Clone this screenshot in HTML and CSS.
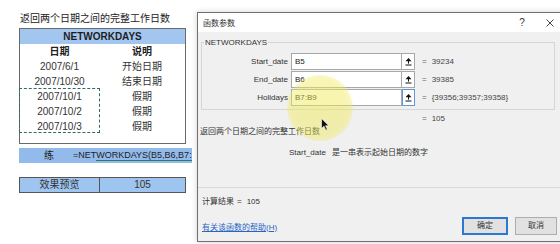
FILE: index.html
```html
<!DOCTYPE html>
<html lang="zh-CN">
<head>
<meta charset="utf-8">
<title>NETWORKDAYS</title>
<link rel="stylesheet" href="styles.css">
</head>
<body>
<div class="screen">
  <section class="sheet">
    <div class="sheet-title">返回两个日期之间的完整工作日数</div>
    <div class="table">
      <div class="thead">NETWORKDAYS</div>
      <div class="trow bold"><span>日期</span><span>说明</span></div>
      <div class="trow"><span>2007/6/1</span><span>开始日期</span></div>
      <div class="trow"><span>2007/10/30</span><span>结束日期</span></div>
      <div class="trow"><span>2007/10/1</span><span>假期</span></div>
      <div class="trow"><span>2007/10/2</span><span>假期</span></div>
      <div class="trow"><span>2007/10/3</span><span>假期</span></div>
      <div class="tfill"></div>
      <div class="marquee"></div>
    </div>
    <div class="formula"><span class="f-label">练</span><span class="f-text">=NET<span class="f-edit">WORKDAYS(B5,B6,B7:</span></span></div>
    <div class="result"><span class="r-cell">效果预览</span><span>105</span></div>
  </section>

  <section class="dialog">
    <div class="titlebar">
      <span class="title">函数参数</span>
      <span class="tb-btn">?</span>
      <span class="tb-btn"><svg width="8" height="8" viewBox="0 0 8 8"><path d="M0.5 0.5 L7.5 7.5 M7.5 0.5 L0.5 7.5" stroke="#333" stroke-width="0.9" fill="none"/></svg></span>
    </div>
    <div class="group">
      <div class="group-title">NETWORKDAYS</div>
      <div class="args">
        <div class="arg">
          <span class="arg-label">Start_date</span>
          <span class="arg-input">B5</span>
          <span class="arg-ref"><svg width="7" height="8" viewBox="0 0 7 8"><path d="M3.5 0 L6.5 3.2 H0.5 Z" fill="#111"/><rect x="3" y="3" width="1" height="2.6" fill="#111"/><rect x="0.5" y="6.5" width="6" height="1" fill="#111"/></svg></span>
          <span class="arg-val"><span class="eq">=</span>39234</span>
        </div>
        <div class="arg">
          <span class="arg-label">End_date</span>
          <span class="arg-input">B6</span>
          <span class="arg-ref"><svg width="7" height="8" viewBox="0 0 7 8"><path d="M3.5 0 L6.5 3.2 H0.5 Z" fill="#111"/><rect x="3" y="3" width="1" height="2.6" fill="#111"/><rect x="0.5" y="6.5" width="6" height="1" fill="#111"/></svg></span>
          <span class="arg-val"><span class="eq">=</span>39385</span>
        </div>
        <div class="arg">
          <span class="arg-label">Holidays</span>
          <span class="arg-input">B7:B9</span>
          <span class="arg-ref active"><svg width="7" height="8" viewBox="0 0 7 8"><path d="M3.5 0 L6.5 3.2 H0.5 Z" fill="#111"/><rect x="3" y="3" width="1" height="2.6" fill="#111"/><rect x="0.5" y="6.5" width="6" height="1" fill="#111"/></svg></span>
          <span class="arg-val"><span class="eq">=</span>{39356;39357;39358}</span>
        </div>
      </div>
    </div>
    <div class="total-line"><span class="eq">=</span>105</div>
    <div class="desc">返回两个日期之间的完整工作日数</div>
    <div class="arg-desc"><span class="ad-name">Start_date</span><span>是一串表示起始日期的数字</span></div>
    <div class="sep"></div>
    <div class="calc"><span>计算结果</span><span class="c-eq">=</span><span class="c-val">105</span></div>
    <div class="footer">
      <span class="help">有关该函数的帮助(H)</span>
      <span class="btn primary">确定</span>
      <span class="btn">取消</span>
    </div>
  </section>
</div>
<div class="spot"></div>
<svg class="cursor" width="9" height="13" viewBox="0 0 9 13"><path d="M0.5 0.5 L0.5 10.5 L3 8.2 L4.8 12.2 L6.3 11.5 L4.6 7.7 L7.8 7.7 Z" fill="#111" stroke="#fff" stroke-width="0.6"/></svg>
</body>
</html>
```

FILE: styles.css
```css
* {
  box-sizing: border-box;
  margin: 0;
  padding: 0;
}

body {
  width: 560px;
  height: 244px;
  overflow: hidden;
  position: relative;
  background: #ffffff;
  font-family: "Liberation Sans", "Noto Sans CJK SC", sans-serif;
}

.screen {
  display: flex;
  height: 244px;
}

/* ---------- spreadsheet ---------- */
.sheet {
  width: 197px;
  flex: none;
  overflow: hidden;
  padding: 12px 0 0 19px;
  color: #333;
  font-size: 10px;
}

.sheet-title {
  height: 16px;
  line-height: 14px;
  padding-left: 1px;
  color: #222;
  white-space: nowrap;
}

.table {
  position: relative;
  width: 167px;
  border: 1px solid #6a6a6a;
}

.thead {
  height: 15px;
  line-height: 15px;
  background: #a3c6f0;
  text-align: center;
  font-weight: bold;
  color: #1e1e1e;
}

.trow {
  display: grid;
  grid-template-columns: 79px 86px;
  height: 15px;
  line-height: 15px;
  text-align: center;
}

.trow.bold {
  font-weight: bold;
  color: #222;
}

.tfill {
  height: 9px;
}

.marquee {
  position: absolute;
  left: -1px;
  top: 59px;
  width: 81px;
  height: 45px;
  border: 1px dashed #2f6d63;
}

.formula {
  margin-top: 4px;
  width: 173px;
  height: 15px;
  line-height: 15px;
  background: #92bbec;
  display: flex;
  white-space: nowrap;
  color: #222;
}

.f-label {
  margin-left: 25px;
  width: 10px;
  font-size: 10px;
}

.f-text {
  margin-left: 19px;
  font-size: 9px;
}

.f-edit {
  border-bottom: 1px solid #2f7a6c;
}

.result {
  margin-top: 14px;
  width: 167px;
  height: 16px;
  display: grid;
  grid-template-columns: 80px 1fr;
  border: 1px solid #555;
  background: #9ec4f0;
  line-height: 14px;
  text-align: center;
  color: #333;
}

.r-cell {
  border-right: 1px solid #555;
}

/* ---------- dialog ---------- */
.dialog {
  width: 375px;
  height: 230px;
  flex: none;
  margin-top: 12px;
  border: 1px solid #707070;
  background: #f0f0f0;
  font-size: 8px;
  color: #222;
  display: flex;
  flex-direction: column;
  box-shadow: 0 0 6px rgba(0, 0, 0, 0.18);
}

.titlebar {
  height: 19px;
  flex: none;
  background: #ffffff;
  display: flex;
  align-items: center;
  padding-left: 5px;
  padding-right: 7px;
  color: #333;
}

.title {
  flex: 1;
}

.tb-btn {
  width: 28px;
  display: flex;
  justify-content: center;
  align-items: center;
  font-size: 10px;
  color: #333;
}

.group {
  margin: 10px 16px 0 3px;
  border: 1px solid #d6d6d6;
  padding-bottom: 2px;
}

.group-title {
  width: fit-content;
  margin: -6px 0 0 2px;
  padding: 0 1px;
  background: #f0f0f0;
  line-height: 11px;
  color: #333;
}

.args {
  margin-top: 5px;
}

.arg {
  display: flex;
  align-items: center;
  height: 17px;
  margin-bottom: 1px;
}

.arg-label {
  width: 89px;
  padding-right: 3px;
  text-align: right;
  color: #333;
}

.arg-input {
  width: 111px;
  height: 17px;
  background: #ffffff;
  border: 1px solid #a8a8a8;
  padding-left: 3px;
  line-height: 15px;
  color: #222;
}

.arg-ref {
  width: 13px;
  height: 17px;
  background: #ffffff;
  border: 1px solid #a8a8a8;
  border-left: none;
  display: flex;
  align-items: center;
  justify-content: center;
}

.arg-ref.active {
  border: 1px solid #5a9ad6;
}

.arg-val {
  padding-left: 7px;
  color: #444;
  white-space: nowrap;
}

.eq {
  margin-right: 5px;
  color: #666;
}

.total-line {
  margin-top: 3px;
  line-height: 11px;
  padding-left: 224px;
  color: #444;
}

.desc {
  margin-top: 2px;
  line-height: 11px;
  padding-left: 2px;
  color: #333;
}

.arg-desc {
  margin-top: 10px;
  line-height: 11px;
  padding-left: 91px;
  color: #333;
}

.ad-name {
  margin-right: 6px;
}

.sep {
  margin-top: 29px;
  border-top: 1px solid #dadada;
  height: 1px;
  background: #fafafa;
}

.calc {
  margin-top: 8px;
  line-height: 11px;
  padding-left: 4px;
  color: #333;
}

.c-eq {
  margin-left: 3px;
}

.c-val {
  margin-left: 5px;
}

.footer {
  margin-top: 10px;
  height: 18px;
  display: flex;
  align-items: center;
  padding: 0 14px 0 4px;
}

.help {
  flex: 1;
  color: #2a64c4;
  text-decoration: underline;
}

.btn {
  width: 42px;
  height: 18px;
  margin-left: 7px;
  background: #e1e1e1;
  border: 1px solid #adadad;
  text-align: center;
  line-height: 16px;
  color: #333;
}

.btn.primary {
  width: 46px;
  border: 1px solid #2a78d0;
  box-shadow: inset 0 0 0 1px #2a78d0;
}

/* ---------- overlays ---------- */
.spot {
  position: absolute;
  left: 287px;
  top: 75px;
  width: 66px;
  height: 66px;
  border-radius: 50%;
  background: radial-gradient(circle, rgba(240, 234, 90, 0.5) 0%, rgba(240, 234, 90, 0.45) 60%, rgba(240, 234, 90, 0) 100%);
  pointer-events: none;
}

.cursor {
  position: absolute;
  left: 321px;
  top: 118px;
}
```
